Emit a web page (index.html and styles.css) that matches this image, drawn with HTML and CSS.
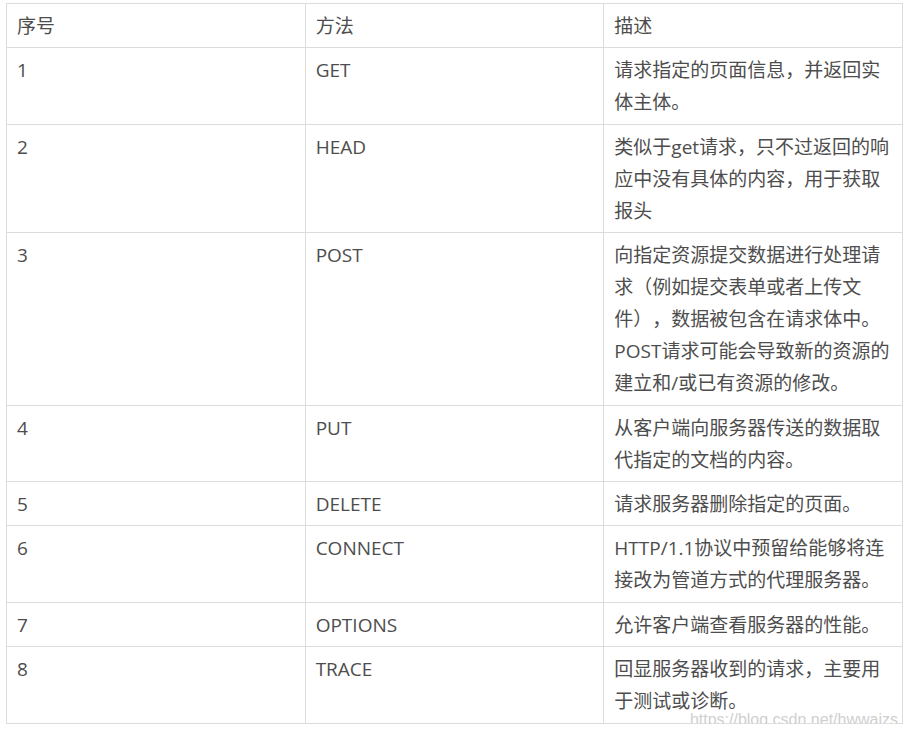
FILE: index.html
```html
<!DOCTYPE html>
<html lang="zh-CN">
<head>
<meta charset="utf-8">
<title>HTTP 方法</title>
<link rel="stylesheet" href="styles.css">
</head>
<body>
<div class="wrap">
  <table class="methods">
    <colgroup><col class="c"><col class="c"><col class="c"></colgroup>
    <thead>
      <tr><th>序号</th><th>方法</th><th>描述</th></tr>
    </thead>
    <tbody>
      <tr><td>1</td><td>GET</td><td>请求指定的页面信息，并返回实体主体。</td></tr>
      <tr><td>2</td><td>HEAD</td><td>类似于get请求，只不过返回的响应中没有具体的内容，用于获取报头</td></tr>
      <tr><td>3</td><td>POST</td><td>向指定资源提交数据进行处理请求（例如提交表单或者上传文件），数据被包含在请求体中。POST请求可能会导致新的资源的建立和/或已有资源的修改。</td></tr>
      <tr><td>4</td><td>PUT</td><td>从客户端向服务器传送的数据取代指定的文档的内容。</td></tr>
      <tr><td>5</td><td>DELETE</td><td>请求服务器删除指定的页面。</td></tr>
      <tr><td>6</td><td>CONNECT</td><td>HTTP/1.1协议中预留给能够将连接改为管道方式的代理服务器。</td></tr>
      <tr><td>7</td><td>OPTIONS</td><td>允许客户端查看服务器的性能。</td></tr>
      <tr><td>8</td><td>TRACE</td><td>回显服务器收到的请求，主要用于测试或诊断。</td></tr>
    </tbody>
  </table>
  <span class="watermark">https://blog.csdn.net/hwwaizs</span>
</div>
</body>
</html>
```

FILE: styles.css
```css
html, body {
  margin: 0;
  padding: 0;
  background: #fff;
}

.wrap {
  position: relative;
  width: 897px;
  margin: 3px 0 0 6px;
}

.methods {
  width: 897px;
  table-layout: fixed;
  border-collapse: collapse;
  font-family: "Open Sans", "Noto Sans CJK SC", sans-serif;
  font-size: 19px;
  line-height: 32px;
  color: #4d4d4d;
  text-spacing-trim: space-all;
}

.methods .c {
  width: 33.333%;
}

.methods th,
.methods td {
  border: 1px solid #dcdcdc;
  padding: 6px 10px 5.4px 10px;
  text-align: left;
  vertical-align: top;
  font-weight: normal;
  word-break: normal;
}

.watermark {
  position: absolute;
  right: 5px;
  bottom: -4px;
  font-family: "Liberation Sans", Arial, sans-serif;
  font-size: 16px;
  line-height: 16px;
  color: #cfcfcf;
  text-shadow: 0 0 1px #fff, 0 0 1px #fff;
  white-space: nowrap;
}
```
